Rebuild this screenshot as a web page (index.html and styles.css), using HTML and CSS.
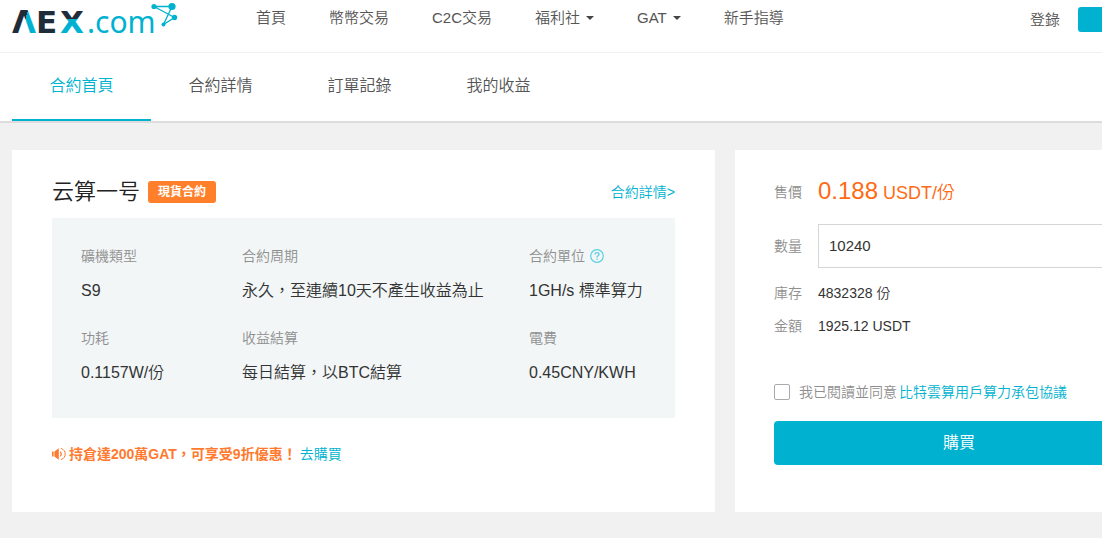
FILE: index.html
```html
<!DOCTYPE html>
<html lang="zh-Hant">
<head>
<meta charset="utf-8">
<title>AEX.com</title>
<link rel="stylesheet" href="styles.css">
</head>
<body>
<header class="header">
  <div class="container header-row">
    <a class="logo" href="#" aria-label="AEX.com">
      <svg width="166" height="44" viewBox="12 0 166 44">
        <defs>
          <linearGradient id="duo-a" gradientUnits="userSpaceOnUse" x1="24" y1="20" x2="26" y2="20.6">
            <stop offset="0.5" stop-color="#1f2d3a"/><stop offset="0.5" stop-color="#00b2d0"/>
          </linearGradient>
          <linearGradient id="duo-x" gradientUnits="userSpaceOnUse" x1="0" y1="18" x2="0" y2="20">
            <stop offset="0.5" stop-color="#1f2d3a"/><stop offset="0.5" stop-color="#00b2d0"/>
          </linearGradient>
        </defs>
        <g class="logo-name">
          <text x="12" y="33" fill="url(#duo-a)">Λ</text>
          <text x="36" y="33" fill="#1f2d3a">E</text>
          <text x="60" y="33" fill="url(#duo-x)">X</text>
        </g>
        <text class="logo-domain" x="87" y="33">.com</text>
        <g stroke="#00b2d0" stroke-width="1.3" fill="none">
          <path d="M154 6.5H172L163.5 24.5L174.5 17.5Z"/>
        </g>
        <g fill="#00b2d0">
          <circle cx="154" cy="6.5" r="2.6"/><circle cx="172" cy="6.5" r="3.6"/>
          <circle cx="174.5" cy="17.5" r="2.7"/><circle cx="163.5" cy="24.5" r="2"/>
        </g>
      </svg>
    </a>
    <nav class="nav">
      <a href="#">首頁</a>
      <a href="#">幣幣交易</a>
      <a href="#">C2C交易</a>
      <a href="#">福利社<span class="caret"></span></a>
      <a href="#">GAT<span class="caret"></span></a>
      <a href="#">新手指導</a>
    </nav>
    <div class="account">
      <a href="#">登錄</a>
      <button class="register" type="button" aria-label="註冊"></button>
    </div>
  </div>
</header>
<nav class="tabs">
  <div class="container tabs-row">
    <a class="tab tab-active" href="#">合約首頁</a>
    <a class="tab" href="#">合約詳情</a>
    <a class="tab" href="#">訂單記錄</a>
    <a class="tab" href="#">我的收益</a>
  </div>
</nav>
<main class="container main">
  <section class="card product">
    <div class="product-head">
      <h1>云算一号</h1>
      <span class="badge">現貨合約</span>
      <a class="detail" href="#">合約詳情&gt;</a>
    </div>
    <dl class="specs">
      <div><dt>礦機類型</dt><dd>S9</dd></div>
      <div><dt>合約周期</dt><dd>永久，至連續10天不產生收益為止</dd></div>
      <div>
        <dt>合約單位
          <svg class="help" width="14" height="14" viewBox="0 0 14 14" fill="none" stroke="#5ccfe0">
            <circle cx="7" cy="7" r="6.3" stroke-width="1.2"/>
            <path d="M5 5.6C5 4.3 5.9 3.6 7 3.6S9 4.3 9 5.4C9 6.7 7 6.8 7 8.4" stroke-width="1.3"/>
            <path d="M7 9.4V10.7" stroke-width="1.4"/>
          </svg>
        </dt>
        <dd>1GH/s 標準算力</dd>
      </div>
      <div><dt>功耗</dt><dd>0.1157W/份</dd></div>
      <div><dt>收益結算</dt><dd>每日結算，以BTC結算</dd></div>
      <div><dt>電費</dt><dd>0.45CNY/KWH</dd></div>
    </dl>
    <p class="promo">
      <svg width="14" height="14" viewBox="0 0 14 14" fill="none" stroke="#ff7a2e">
        <path d="M0 4.5H1.6V9.5H0ZM2.4 4.5L6.8 1.2V12.8L2.4 9.5Z" fill="#ff7a2e" stroke="none"/>
        <path d="M8.2 4.6Q10.4 7 8.2 9.4" stroke-width="1.1"/>
        <path d="M9 1.4C14.6 3 14.6 11 9 12.6" stroke-width="1"/>
      </svg>
      <strong>持倉達200萬GAT，可享受9折優惠！</strong>
      <a href="#">去購買</a>
    </p>
  </section>
  <form class="card order">
    <div class="row row-price">
      <span class="label">售價</span>
      <span class="price"><span class="amount">0.188</span> USDT/份</span>
    </div>
    <div class="row row-qty">
      <label class="label" for="qty">數量</label>
      <input class="qty" id="qty" type="text" value="10240">
    </div>
    <div class="row row-stock"><span class="label">庫存</span><span>4832328 份</span></div>
    <div class="row row-total"><span class="label">金額</span><span>1925.12 USDT</span></div>
    <div class="agree">
      <input class="check" id="agree" type="checkbox">
      <label for="agree">我已閱讀並同意</label>
      <a href="#">比特雲算用戶算力承包協議</a>
    </div>
    <button class="buy" type="button">購買</button>
  </form>
</main>
</body>
</html>
```
FILE: styles.css
```css
* { box-sizing: border-box; }

body {
  margin: 0;
  background: #f1f1f1;
  color: #333;
  font: 350 14px/20px "Liberation Sans", "Noto Sans CJK TC", sans-serif;
  overflow-x: hidden;
}

a { color: #00b2d0; text-decoration: none; }

.container { min-width: 1196px; padding: 0 12px; }

.header { min-width: 1196px; background: #fff; border-bottom: 1px solid #f0f0f0; }
.header-row { display: flex; align-items: flex-start; padding-bottom: 8px; }
.logo { display: block; height: 44px; }
.logo svg { display: block; }
.logo-name { font: 700 31px "DejaVu Sans", sans-serif; }
.logo-domain { font: 400 30px "Noto Sans", sans-serif; fill: #00b2d0; }

.nav { display: flex; gap: 43px; margin-left: 78px; padding-top: 8px; font-size: 15px; }
.nav a { display: flex; align-items: center; color: #555; }
.caret {
  margin-left: 6px;
  border: 4px solid transparent;
  border-top-color: #444;
  border-bottom: 0;
}

.account { display: flex; align-items: center; gap: 18px; margin-left: auto; padding-top: 7px; font-size: 15px; }
.account a { color: #555; }
.register { width: 106px; height: 25px; border: 0; border-radius: 3px; background: #00b2d0; }

.tabs { min-width: 1196px; background: #fff; border-bottom: 2px solid #dcdcdc; }
.tabs-row { display: flex; }
.tab {
  width: 139px;
  padding: 22px 0;
  border-bottom: 2px solid transparent;
  color: #555;
  font-size: 16px;
  line-height: 22px;
  text-align: center;
}
.tab-active { border-color: #00b2d0; color: #00b2d0; }

.main { display: grid; grid-template-columns: 703fr 449fr; gap: 20px; padding-top: 27px; padding-bottom: 27px; }
.card { padding: 27px 40px 47px; background: #fff; }
.order { padding-left: 39px; }

.product-head { display: flex; align-items: center; height: 30px; margin-bottom: 11px; }
.product-head h1 { margin: 0; font-size: 22px; font-weight: 350; line-height: 30px; color: #222; }
.badge {
  margin-left: 8px;
  padding: 0 10px;
  border-radius: 3px;
  background: #ff7f2a;
  color: #fff;
  font-size: 12px;
  font-weight: 700;
  line-height: 22px;
}
.detail { margin-left: auto; }

.specs {
  display: grid;
  grid-template-columns: 161px 287px 1fr;
  row-gap: 25px;
  margin: 0;
  padding: 28px 0 33px 29px;
  background: #f2f6f7;
}
.specs dt { display: flex; align-items: center; gap: 5px; margin-bottom: 13px; color: #8f8f8f; }
.specs dd { margin: 0; font-family: "Liberation Sans", "Noto Sans CJK SC", sans-serif; font-size: 16px; line-height: 24px; }

.promo { display: flex; align-items: center; gap: 3px; margin: 26px 0 0; }
.promo strong { color: #ff7a2e; font-family: "Liberation Sans", "Noto Sans CJK SC", sans-serif; font-weight: 700; }

.row { display: flex; align-items: center; }
.label { flex: none; width: 44px; color: #8f8f8f; }
.row-price { height: 30px; margin-bottom: 17px; }
.price { color: #ff6a13; font-size: 18px; line-height: 30px; }
.amount { font-size: 24px; }
.row-qty { margin-bottom: 15px; }
.qty {
  flex: 1;
  min-width: 0;
  height: 44px;
  padding: 0 10px 2px;
  border: 1px solid #d5d5d5;
  background: #fff;
  color: #333;
  font: inherit;
  font-size: 15px;
}
.row-stock { margin-bottom: 13px; }
.agree { display: flex; align-items: center; margin-top: 46px; margin-bottom: 19px; }
.agree label { margin-right: 2px; color: #8f8f8f; }
.check {
  appearance: none;
  width: 16px;
  height: 16px;
  margin: 0 9px 0 0;
  border: 1px solid #aaa;
  border-radius: 2px;
  background: #fff;
}
.buy {
  width: 100%;
  height: 44px;
  border: 0;
  border-radius: 4px;
  background: #00b2d0;
  color: #fff;
  font: inherit;
  font-size: 16px;
}
```
